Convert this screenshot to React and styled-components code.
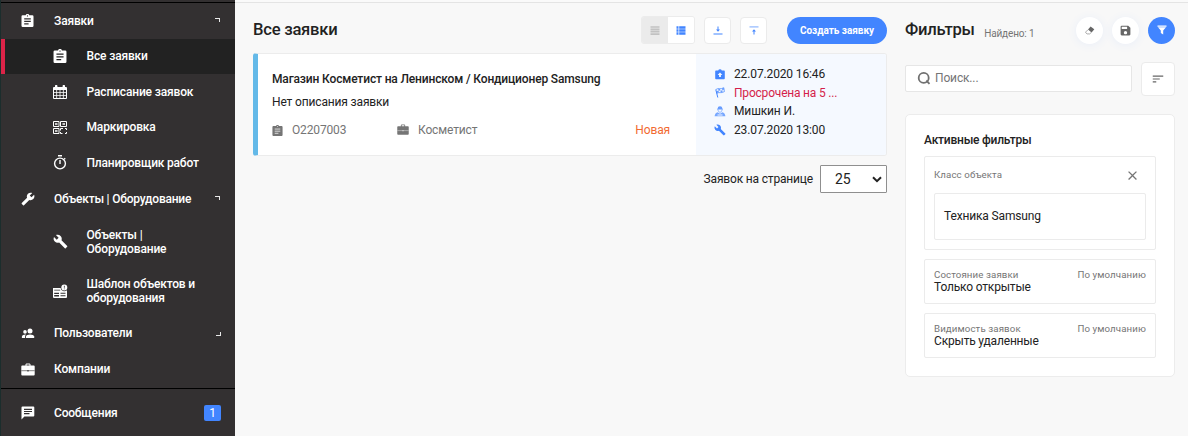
import React from "react";
import styled, { createGlobalStyle, css } from "styled-components";
import { MdBuild, MdClose, MdSave, MdSort } from "react-icons/md";

const Global = createGlobalStyle`
  *, *::before, *::after { box-sizing: border-box; }
  body { margin: 0; background: #f8f8f8; font-family: Roboto, "Liberation Sans", sans-serif; font-size: 12px; letter-spacing: -0.15px; color: #222; overflow: hidden; }
  button, select, input { font-family: inherit; }
  svg { display: block; flex: none; }
`;

const Page = styled.div`
  display: flex;
  height: 436px;
  width: 1188px;
  overflow: hidden;
`;

/* ---------- sidebar ---------- */
const Sidebar = styled.nav`
  width: 235px;
  flex: none;
  background: #333031;
  border-left: 1px solid #1b2d2c;
  color: #fff;
`;
const SidebarTop = styled.div`
  height: 3px;
  border-bottom: 1px solid #000;
`;
const MenuRow = styled.a`
  display: flex;
  align-items: center;
  height: ${(p) => p.$h || 35.5}px;
  padding-left: ${(p) => (p.$sub ? 51 : 19)}px;
  padding-right: 14px;
  line-height: 14px;
  font-size: 12px;
  font-weight: 500;
  letter-spacing: ${(p) => p.$track || -0.15}px;
  color: #fff;
  ${(p) => p.$active && css`
    background: #222;
    border-left: 4px solid #dc2448;
    padding-left: 47px;
  `}
`;
const MenuIcon = styled.span`
  display: flex;
  width: ${(p) => (p.$sub ? 34.5 : 34)}px;
  padding-left: 1px;
  flex: none;
`;
const MenuText = styled.span`
  flex: 1;
  white-space: pre-line;
`;
const Corner = styled.i`
  width: 5px;
  height: 4px;
  margin-right: 1px;
  border: 0 solid #e8e8e8;
  border-right-width: 1px;
  ${(p) => (p.$open ? "border-top-width: 1px; margin-bottom: 1px;" : "border-bottom-width: 1px; margin-top: 1px; margin-right: 0;")}
`;
const Divider = styled.div`
  height: 1px;
  background: #000;
`;
const Badge = styled.span`
  width: 17px;
  height: 16px;
  border-radius: 2px;
  background: #4285ff;
  text-align: center;
  line-height: 16px;
  font-size: 12px;
  font-weight: 400;
`;

/* ---------- main column ---------- */
const Content = styled.div`
  flex: 1;
  display: flex;
  border-top: 2px solid #fafafa;
  box-shadow: inset 0 1px 0 #e4e4e4;
`;
const Main = styled.main`
  width: 652px;
  padding: 14px 0 0 18px;
`;
const Toolbar = styled.header`
  display: flex;
  align-items: center;
  height: 28px;
`;
const Title = styled.h1`
  margin: 0;
  font-size: 16.6px;
  font-weight: 500;
  line-height: 24px;
  letter-spacing: -0.25px;
  color: #222;
`;
const Toggle = styled.div`
  display: flex;
  margin-left: auto;
  margin-right: 9px;
  width: 54px;
  height: 28px;
  border: 1px solid #ececec;
  border-radius: 3px;
  overflow: hidden;
`;
const ToggleHalf = styled.span`
  flex: 1;
  display: grid;
  place-items: center;
  background: ${(p) => (p.$on ? "#fff" : "#ebebeb")};
  color: ${(p) => (p.$on ? "#4285ff" : "#c2c2c2")};
`;
const SquareButton = styled.button`
  display: grid;
  place-items: center;
  width: ${(p) => p.$size || 27}px;
  height: ${(p) => p.$size || 27}px;
  padding: 0;
  margin-right: ${(p) => p.$gap || 0}px;
  background: #fff;
  border: 1px solid #ebebeb;
  border-radius: 4px;
  color: ${(p) => p.$color || "#4285ff"};
`;
const CreateButton = styled.button`
  width: 100px;
  height: 27px;
  padding: 0;
  border: 0;
  border-radius: 14px;
  background: #4285ff;
  color: #fff;
  font-size: 10px;
  font-weight: 700;
  letter-spacing: -0.02px;
  white-space: nowrap;
`;
const Card = styled.article`
  display: flex;
  height: 103px;
  margin-top: 9px;
  border: 1px solid #ececec;
  border-left: 5px solid #64b9e8;
  border-radius: 3px;
  background: #fff;
  overflow: hidden;
  width: 634px;
`;
const CardBody = styled.div`
  flex: 1;
  padding: 18px 26px 0 14px;
`;
const CardTitle = styled.h2`
  margin: 0 0 9px;
  font-size: 12px;
  line-height: 14px;
  font-weight: 500;
  color: #222;
`;
const CardText = styled.p`
  margin: 0 0 14px;
  font-size: 12px;
  line-height: 14px;
`;
const Meta = styled.div`
  display: flex;
  color: #757575;
  line-height: 14px;
`;
const MetaItem = styled.span`
  display: flex;
  align-items: center;
  gap: ${(p) => p.$gap}px;
  width: ${(p) => p.$w}px;
`;
const Status = styled.span`
  margin-left: auto;
  color: #f26a31;
`;
const CardSide = styled.div`
  width: 190px;
  padding: 11px 0 0 18px;
  background: #f5f9ff;
`;
const Fact = styled.div`
  display: flex;
  align-items: center;
  gap: 8px;
  height: 18.600px;
  line-height: 14px;
  letter-spacing: ${(p) => (p.$late ? -0.2 : -0.13)}px;
  color: ${(p) => (p.$late ? "#d41f4b" : "#222")};
  svg { color: #4285ff; }
`;
const Pager = styled.div`
  display: flex;
  align-items: center;
  justify-content: flex-end;
  gap: 7px;
  margin-top: 9px;
  width: 634px;
  letter-spacing: -0.17px;
`;
const SelectBox = styled.div`
  display: flex;
  align-items: center;
  justify-content: space-between;
  width: 67px;
  height: 28px;
  padding: 0 4px 0 14px;
  background: #fff;
  border: 1px solid #8f8f8f;
  border-radius: 1px;
  font-size: 14px;
  letter-spacing: 0;
`;

/* ---------- filter column ---------- */
const Aside = styled.aside`
  width: 270px;
  margin-left: 18px;
  padding-top: 14px;
`;
const Found = styled.span`
  margin: 7px auto 0 9.500px;
  font-size: 10px;
  color: #757575;
`;
const RoundButton = styled.button`
  display: grid;
  place-items: center;
  width: 27px;
  height: 27px;
  margin-left: 9px;
  padding: 0;
  border: 0;
  border-radius: 50%;
  background: ${(p) => (p.$primary ? "#4285ff" : "#fff")};
  color: ${(p) => (p.$primary ? "#fff" : "#666")};
  box-shadow: ${(p) => (p.$primary ? "none" : "0 1px 10px rgba(66, 133, 255, 0.08)")};
`;
const SearchRow = styled.div`
  display: flex;
  align-items: center;
  justify-content: space-between;
  margin-top: 17px;
  height: 35px;
`;
const Search = styled.label`
  display: flex;
  align-items: center;
  gap: 4px;
  width: 227px;
  height: 27px;
  padding: 0 0 2px 11px;
  background: #fff;
  border: 1px solid #e6e6e6;
  border-radius: 2px;
  font-size: 12px;
  color: #757575;
`;
const Panel = styled.section`
  height: 263px;
  margin-top: 18px;
  padding: 18px 18px 0;
  background: #fff;
  border: 1px solid #ececec;
  border-radius: 5px;
`;
const PanelTitle = styled.h3`
  margin: 0 0 9px;
  font-size: 12px;
  line-height: 14px;
  font-weight: 500;
  letter-spacing: -0.22px;
`;
const FilterBox = styled.div`
  height: ${(p) => p.$h}px;
  margin-bottom: 9px;
  padding: ${(p) => p.$pt}px 9px 0;
  border: 1px solid #ebebeb;
  border-radius: 2px;
`;
const FilterHead = styled.div`
  display: flex;
  justify-content: space-between;
  align-items: center;
  height: 12px;
  line-height: 12px;
  font-size: 9.7px;
  letter-spacing: 0.11px;
  color: #757575;
`;
const CloseIcon = styled(MdClose)`
  margin-right: 6px;
`;
const FilterValue = styled.div`
  line-height: 13px;
  font-size: 12px;
  letter-spacing: -0.18px;
`;
const Choice = styled.div`
  display: flex;
  align-items: center;
  height: 47px;
  margin-top: 12px;
  padding: 0 0 2px 9px;
  border: 1px solid #ebebeb;
  border-radius: 2px;
`;

/* ---------- drawings ---------- */
const ClipboardIcon = ({ w = 13, hole = "#333031" }) => (
  <svg width={w} height={w} viewBox="0 0 13 13">
    <path fill="currentColor" d="M1.700 1.300h3a1.850 1.850 0 0 1 3.600 0h3q1.200 0 1.200 1.200v9.300q0 1.200-1.200 1.200H1.700q-1.200 0-1.200-1.200V2.500q0-1.200 1.200-1.200z" />
    <circle cx="6.500" cy="1.900" r=".6" fill={hole} />
    <path stroke={hole} strokeWidth="1.150" d="M3.200 4.800h6.600M3.200 7.300h6.600M3.200 9.800h4.400" />
  </svg>
);
const BriefcaseIcon = ({ w = 14, hole = "#333031" }) => (
  <svg width={w} height={(w * 13) / 14} viewBox="0 0 14 13">
    <path fill="currentColor" fillRule="evenodd" d="M4.500 2.500V1.300L5.300.5h3.400l.8.800v1.200h3.300q.9 0 .9.900v8.200q0 .9-.9.900H1.200q-.9 0-.9-.9V3.400q0-.9.900-.9zM5.500 2.500h3v-1h-3z" />
    <path stroke={hole} strokeWidth=".6" d="M.3 7.700h13.400" />
    <path fill={hole} d="M6.400 7h1.200v1.500H6.400z" />
  </svg>
);
const UsersIcon = () => (
  <svg width="14" height="11" viewBox="0 0 14 11" fill="#fff">
    <circle cx="9" cy="3" r="2.500" />
    <path d="M4.900 10V8.600C4.900 5.700 13.200 5.700 13.200 8.600V10z" />
    <circle cx="4" cy="3.900" r="1.800" />
    <path d="M.9 10V8.500q.3-2.100 4.200-2Q4 7.300 4 8.500V10z" />
  </svg>
);
const MessageIcon = () => (
  <svg width="14" height="14" viewBox="0 0 14 14">
    <path fill="#fff" d="M1.500.5h10.800q1 0 1 1v8q0 1-1 1H3.400L.5 13.500v-12q0-1 1-1z" />
    <path stroke="#333031" strokeWidth="1.100" d="M3 3.400h8M3 5.500h8M3 7.600h5.500" />
  </svg>
);
const CalendarIcon = () => (
  <svg width="14" height="14" viewBox="0 0 14 14">
    <path fill="#fff" fillRule="evenodd" d="M2 2V1a1 1 0 0 1 2.400 0v1h5.200V1A1 1 0 0 1 12 1v1h1q1 0 1 1v10q0 1-1 1H1q-1 0-1-1V3q0-1 1-1zM1 5v2h2.300V5zm3.100 0v2h2.500V5zm3.300 0v2h2.500V5zm3.300 0v2H13V5zM1 7.800v2.200h2.300V7.800zm3.100 0v2.200h2.500V7.800zm3.300 0v2.200h2.500V7.800zm3.300 0v2.200H13V7.800zM1 10.800V13h2.300v-2.200zm3.100 0V13h2.500v-2.200zm3.300 0V13h2.500v-2.200zm3.300 0V13H13v-2.200z" />
  </svg>
);
const QrIcon = () => (
  <svg width="14" height="13" viewBox="0 0 14 13" fill="none" stroke="#fff">
    <path d="M.5.5H6v5H.5zM7.500.5h6v5h-6zM.5 7.500H6v5H.5zM7.500 9.500v-2H10M12 7.500h1.500V9M7.500 11v1.500h2M12 12.500h1.500V11" />
    <path fill="#fff" fillOpacity=".75" stroke="none" d="M2 2h2.500v2H2zM9.500 2H12v2H9.500zM2 9h2.500v2H2z" />
  </svg>
);
const TimerIcon = () => (
  <svg width="14" height="15" viewBox="0 0 14 15" fill="none" stroke="#fff" strokeWidth="1.400">
    <circle cx="7" cy="8.500" r="5.400" />
    <path d="M5 .7h4M7 5v4M11.200 3.200l1 1" />
  </svg>
);
const TemplateIcon = () => (
  <svg width="15" height="15" viewBox="0 0 15 15" fill="#fff">
    <path fillRule="evenodd" d="M0 4h7.600a3.800 3.800 0 0 0 6.400 2.200V13q0 1-1 1H1q-1 0-1-1zM1.200 5.700v.9h6v-.9zM1.200 8.800v1.300h4.800V8.800zm0 2.300v1.300h4.800v-1.300zM7.500 8.800v1h5v-1zm0 2.500v1h5v-1z" />
    <path fillRule="evenodd" d="M11.300.500a3 3 0 1 1 0 6 3 3 0 0 1 0-6zM10.900 1.800v2h.8v-2zm0 2.600v.9h.8v-.9z" />
  </svg>
);
const RowsIcon = () => (
  <svg width="10" height="9" viewBox="0 0 10 9" stroke="currentColor" strokeWidth="1.700">
    <path d="M.5 1h9M.5 3.350h9M.5 5.700h9M.5 8.050h9" />
  </svg>
);
const ListIcon = () => (
  <svg width="10" height="9" viewBox="0 0 10 9" fill="currentColor">
    <path d="M.5.300h2v2.400h-2zM3.200.300h6.300v2.400H3.200zM.5 3.300h2v2.400h-2zM3.200 3.300h6.300v2.400H3.200zM.5 6.300h2v2.400h-2zM3.200 6.300h6.300v2.400H3.200z" />
  </svg>
);
const DownIcon = () => (
  <svg width="10" height="9" viewBox="0 0 10 9" fill="currentColor">
    <path d="M.5 7.500h9v1h-9zM4.500.5h1v3H7l-2 2.200L3 3.500h1.500z" />
  </svg>
);
const UpIcon = () => (
  <svg width="10" height="9" viewBox="0 0 10 9" fill="currentColor">
    <path opacity=".6" d="M.5.300h9v1.200h-9z" />
    <path d="M4.500 8.500h1v-3H7L5 3.200 3 5.500h1.500z" />
  </svg>
);
const ReceivedIcon = () => (
  <svg width="12" height="11" viewBox="0 0 12 11" fill="currentColor">
    <path fillRule="evenodd" d="M2 1.500h2.200a1.900 1.900 0 0 1 3.600 0H10q.8 0 .8.800v7q0 .9-.8.900H2q-.8 0-.8-.9v-7q0-.8.800-.8zM5.100 8h1.800V6h1.500L6 3.400 3.600 6h1.500z" />
  </svg>
);
const FlagIcon = () => (
  <svg width="12" height="11" viewBox="0 0 12 11" fill="none" stroke="currentColor">
    <path d="M1.800 2.600l2 7.900" />
    <path strokeWidth=".7" d="M1.800 2.600C4.500.3 6 3 9.800.700l.6 3.900C7 6.800 5.500 4.500 2.700 6.500" />
    <path fill="currentColor" stroke="none" opacity=".8" d="M4.200 1.700l1.800.3.400 1.700-1.900-.3zM8 1.600l1.700-.7.300 1.700-1.700.6zM2.300 4.200l2.200-.8.400 1.800-2.100.9zM6.400 3.700l1.900-.5.300 1.900-1.900.2z" />
  </svg>
);
const PersonIcon = () => (
  <svg width="12" height="11" viewBox="0 0 12 11" fill="currentColor">
    <path opacity=".8" d="M3.600 2.500A2.400 2.400 0 0 1 6 .3a2.400 2.400 0 0 1 2.400 2.200l.7.900H2.900z" />
    <path fill="none" stroke="currentColor" strokeWidth=".7" opacity=".8" d="M4 3.500c0 3.600 4 3.600 4 0" />
    <path opacity=".7" fillRule="evenodd" d="M3.700 6.300Q1 6.700.6 10.300h10.800Q11 6.700 8.300 6.300L6 7.800zM3.500 8.600v1h5v-1z" />
  </svg>
);
const EraserIcon = () => (
  <svg width="10" height="9" viewBox="0 0 10 9">
    <path fill="#666" d="M5.600.500L9.300 3.300 6.600 6.400 3 3.600z" />
    <path fill="none" stroke="#888" strokeWidth=".7" d="M3 3.700L.8 5.900q-.4.600.2 1.100l1.100.9h2.600l1.700-1.600" />
  </svg>
);
const FunnelIcon = () => (
  <svg width="10" height="10" viewBox="0 0 10 10" fill="currentColor">
    <path d="M.5.500h9v1.200h-9zM1 2.300h8L6.200 5.500v4L3.800 8V5.500z" />
  </svg>
);
const SearchIcon = () => (
  <svg width="14" height="14" viewBox="0 0 14 14" fill="none" stroke="#707070" strokeWidth="1.800">
    <circle cx="6.700" cy="6.900" r="5" />
    <path d="M9.300 9.500l3.200 3.300" />
  </svg>
);
const Chevron = () => (
  <svg width="10" height="7" viewBox="0 0 10 7" fill="none" stroke="#222" strokeWidth="2">
    <path d="M1 1.200l4 4 4-4" />
  </svg>
);
const MirroredBuild = styled(MdBuild)`
  transform: scaleX(-1);
`;

const menu = [
  { text: "Заявки", icon: <ClipboardIcon w={13} />, open: true },
  { text: "Все заявки", icon: <ClipboardIcon w={14} hole="#222" />, sub: true, active: true },
  { text: "Расписание заявок", icon: <CalendarIcon />, sub: true },
  { text: "Маркировка", icon: <QrIcon />, sub: true },
  { text: "Планировщик работ", icon: <TimerIcon />, sub: true, h: 35.8, track: -0.19 },
  { text: "Объекты | Оборудование", icon: <MirroredBuild size={14} />, open: true, h: 36, track: -0.22 },
  { text: "Объекты |\nОборудование", icon: <MdBuild size={15} />, sub: true, h: 49.5 },
  { text: "Шаблон объектов и\nоборудования", icon: <TemplateIcon />, sub: true, h: 49.5, track: -0.19 },
  { text: "Пользователи", icon: <UsersIcon />, open: false, h: 34.5, track: -0.2 },
  { text: "Компании", icon: <BriefcaseIcon />, h: 37.7 },
];

const defaults = [
  ["Состояние заявки", "Только открытые"],
  ["Видимость заявок", "Скрыть удаленные"],
];

export default function App() {
  return (
    <Page>
      <Global />
      <Sidebar>
        <SidebarTop />
        {menu.map((m) => (
          <MenuRow key={m.text} $sub={m.sub} $active={m.active} $h={m.h} $track={m.track}>
            <MenuIcon $sub={m.sub}>{m.icon}</MenuIcon>
            <MenuText>{m.text}</MenuText>
            {m.open !== undefined && <Corner $open={m.open} />}
          </MenuRow>
        ))}
        <Divider />
        <MenuRow $h={48} $track={-0.2}>
          <MenuIcon><MessageIcon /></MenuIcon>
          <MenuText>Сообщения</MenuText>
          <Badge>1</Badge>
        </MenuRow>
      </Sidebar>
      <Content>
        <Main>
          <Toolbar>
            <Title>Все заявки</Title>
            <Toggle>
              <ToggleHalf><RowsIcon /></ToggleHalf>
              <ToggleHalf $on><ListIcon /></ToggleHalf>
            </Toggle>
            <SquareButton $gap={9}><DownIcon /></SquareButton>
            <SquareButton $gap={20}><UpIcon /></SquareButton>
            <CreateButton>Создать заявку</CreateButton>
          </Toolbar>
          <Card>
            <CardBody>
              <CardTitle>Магазин Косметист на Ленинском / Кондиционер Samsung</CardTitle>
              <CardText>Нет описания заявки</CardText>
              <Meta>
                <MetaItem $gap={9} $w={125}><ClipboardIcon w={11} hole="#ddd" />О2207003</MetaItem>
                <MetaItem $gap={9} $w={120}><BriefcaseIcon w={12} hole="#ddd" />Косметист</MetaItem>
                <Status>Новая</Status>
              </Meta>
            </CardBody>
            <CardSide>
              <Fact><ReceivedIcon />22.07.2020 16:46</Fact>
              <Fact $late><FlagIcon />Просрочена на 5 ...</Fact>
              <Fact><PersonIcon />Мишкин И.</Fact>
              <Fact><MdBuild size={12} />23.07.2020 13:00</Fact>
            </CardSide>
          </Card>
          <Pager>
            Заявок на странице
            <SelectBox>25<Chevron /></SelectBox>
          </Pager>
        </Main>
        <Aside>
          <Toolbar>
            <Title>Фильтры</Title>
            <Found>Найдено: 1</Found>
            <RoundButton><EraserIcon /></RoundButton>
            <RoundButton><MdSave size={13} /></RoundButton>
            <RoundButton $primary><FunnelIcon /></RoundButton>
          </Toolbar>
          <SearchRow>
            <Search><SearchIcon />Поиск...</Search>
            <SquareButton $size={34} $color="#666"><MdSort size={14} /></SquareButton>
          </SearchRow>
          <Panel>
            <PanelTitle>Активные фильтры</PanelTitle>
            <FilterBox $h={94} $pt={12}>
              <FilterHead>Класс объекта<CloseIcon size={15} /></FilterHead>
              <Choice>Техника Samsung</Choice>
            </FilterBox>
            {defaults.map(([name, value]) => (
              <FilterBox key={name} $h={45} $pt={9}>
                <FilterHead>{name}<span>По умолчанию</span></FilterHead>
                <FilterValue>{value}</FilterValue>
              </FilterBox>
            ))}
          </Panel>
        </Aside>
      </Content>
    </Page>
  );
}
